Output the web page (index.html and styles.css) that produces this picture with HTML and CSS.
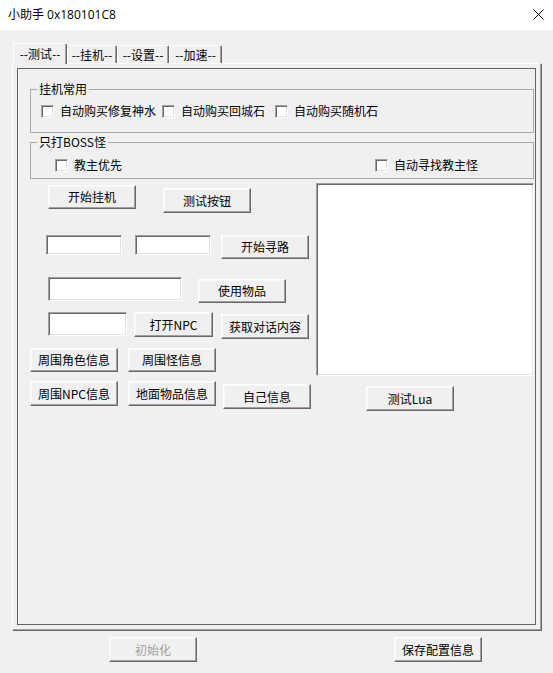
FILE: index.html
```html
<!DOCTYPE html>
<html lang="zh-CN">
<head>
<meta charset="utf-8">
<title>小助手</title>
<link rel="stylesheet" href="styles.css">
</head>
<body>
<div class="titlebar">
  <span class="title">小助手 0x180101C8</span>
  <svg class="close" width="11" height="11" viewBox="0 0 11 11"><path d="M0.5 0.5 L10.5 10.5 M10.5 0.5 L0.5 10.5" stroke="#000" stroke-width="1" fill="none"/></svg>
</div>
<div class="dialog">
  <div class="tabs">
    <div class="tab tab-active w54">--测试--</div>
    <div class="tab w50">--挂机--</div>
    <div class="tab w52">--设置--</div>
    <div class="tab w53">--加速--</div>
  </div>
  <div class="panel">
    <div class="frame">
      <div class="group g1">
        <div class="group-title">挂机常用</div>
        <div class="checks g1-checks">
          <label class="chk c1"><span class="box"></span>自动购买修复神水</label>
          <label class="chk c2"><span class="box"></span>自动购买回城石</label>
          <label class="chk"><span class="box"></span>自动购买随机石</label>
        </div>
      </div>
      <div class="group g2">
        <div class="group-title">只打BOSS怪</div>
        <div class="checks g2-checks">
          <label class="chk c3"><span class="box"></span>教主优先</label>
          <label class="chk"><span class="box"></span>自动寻找教主怪</label>
        </div>
      </div>
      <div class="work">
        <div class="left">
          <div class="row row-a">
            <button class="btn h24 a1">开始挂机</button>
            <button class="btn a2">测试按钮</button>
          </div>
          <div class="row row-b">
            <input class="edit e-b1" type="text">
            <input class="edit e-b2" type="text">
            <button class="btn h24 b3">开始寻路</button>
          </div>
          <div class="row row-c">
            <input class="edit e-c1" type="text">
            <button class="btn h24 c2b">使用物品</button>
          </div>
          <div class="row row-d">
            <input class="edit e-d1" type="text">
            <button class="btn d2">打开NPC</button>
            <button class="btn d3">获取对话内容</button>
          </div>
          <div class="row row-e">
            <button class="btn h24 e1">周围角色信息</button>
            <button class="btn h24 e2">周围怪信息</button>
          </div>
          <div class="row row-f">
            <button class="btn f1">周围NPC信息</button>
            <button class="btn f2">地面物品信息</button>
            <button class="btn f3">自己信息</button>
          </div>
        </div>
        <div class="right">
          <textarea class="log"></textarea>
          <button class="btn lua">测试Lua</button>
        </div>
      </div>
    </div>
  </div>
  <div class="footer">
    <button class="btn disabled ft1">初始化</button>
    <button class="btn ft2">保存配置信息</button>
  </div>
</div>
</body>
</html>
```

FILE: styles.css
```css
* { box-sizing: border-box; }
html, body { margin: 0; padding: 0; }
body {
  width: 553px;
  height: 673px;
  overflow: hidden;
  background: #f0f0f0;
  font-family: "Noto Sans CJK SC", "Noto Sans", sans-serif;
  font-size: 12px;
  color: #000;
}
.titlebar {
  height: 30px;
  background: #fff;
  display: flex;
  align-items: center;
  justify-content: space-between;
  padding: 0 9px 0 8px;
}
.title {
  font-family: "Open Sans", "Noto Sans CJK SC", sans-serif;
  font-size: 12px;
  line-height: 16px;
  margin-top: -1px;
}
.close { display: block; margin-top: -1px; }

.tabs {
  display: flex;
  align-items: flex-end;
  height: 20px;
  margin: 13px 0 0 13px;
}
.tab {
  height: 18px;
  background: #f0f0f0;
  border-left: 1px solid #fff;
  border-top: 1px solid #fff;
  border-right: 1px solid #696969;
  box-shadow: inset -1px 0 #a0a0a0;
  border-radius: 2px 2px 0 0;
  display: flex;
  align-items: center;
  justify-content: center;
  line-height: 14px;
  font-size: 12px;
}
.tab-active {
  height: 21px;
  margin-bottom: -1px;
  position: relative;
  z-index: 1;
  padding-bottom: 1px;
}
.w54 { width: 54px; }
.w50 { width: 50px; }
.w52 { width: 52px; }
.w53 { width: 53px; }

.panel {
  margin-left: 12px;
  width: 529px;
  height: 567px;
  padding: 4px;
  border-left: 1px solid #fff;
  border-top: 1px solid #fff;
  border-right: 1px solid #a0a0a0;
  border-bottom: 1px solid #a0a0a0;
  box-shadow: 1px 1px 0 #696969;
}
.frame {
  height: 557px;
  border: 1px solid #646464;
  padding-top: 20px;
}

.group {
  margin-left: 12px;
  width: 504px;
  border: 1px solid #a8a8a8;
}
.g1 { height: 44px; }
.g2 { height: 37px; margin-top: 9px; }
.group-title {
  margin: -8px 0 0 6px;
  padding: 0 2px;
  width: fit-content;
  line-height: 14px;
  background: #f0f0f0;
}
.checks { display: flex; align-items: center; height: 16px; }
.g1-checks { margin-top: 7px; padding-left: 10px; }
.g2-checks { margin-top: 8px; padding-left: 24px; }
.chk { display: flex; align-items: center; line-height: 14px; }
.c1 { width: 121px; }
.c2 { width: 113px; }
.c3 { width: 320px; }
.box {
  width: 13px;
  height: 13px;
  margin-right: 6px;
  background: #fff;
  border: 1px solid;
  border-color: #a0a0a0 #fff #fff #a0a0a0;
  box-shadow: inset 1px 1px #696969, inset -1px -1px #e3e3e3;
}

.work { display: flex; margin-top: 4px; }
.left { width: 298px; }
.right { width: 218px; }
.row { display: flex; align-items: flex-start; }

.btn {
  width: 88px;
  height: 25px;
  margin: 0;
  padding: 0;
  background: #f0f0f0;
  font-family: inherit;
  font-size: 12px;
  line-height: 14px;
  color: #000;
  border: 1px solid;
  border-color: #fff #696969 #696969 #fff;
  box-shadow: inset -1px -1px #a0a0a0, inset 1px 1px #f8f8f8;
  border-radius: 0;
}
.h24 { height: 24px; }
.disabled { color: #a0a0a0; }

.edit {
  height: 24px;
  margin: 0;
  padding: 0 2px;
  background: #fff;
  font-family: inherit;
  font-size: 12px;
  border: 1px solid;
  border-color: #a0a0a0 #fff #fff #a0a0a0;
  box-shadow: inset 1px 1px #696969, inset -1px -1px #e3e3e3;
  outline: none;
}

.row-a { margin-top: 2px; }
.a1 { margin-left: 30px; }
.a2 { margin-left: 27px; margin-top: 3px; }

.row-b { margin-top: 22px; }
.e-b1 { margin-left: 28px; width: 76px; height: 20px; }
.e-b2 { margin-left: 13px; width: 76px; height: 20px; }
.b3 { margin-left: 10px; }

.row-c { margin-top: 18px; }
.e-c1 { margin-left: 30px; width: 134px; }
.c2b { margin-left: 16px; margin-top: 2px; }

.row-d { margin-top: 9px; }
.e-d1 { margin-left: 30px; width: 79px; }
.d2 { margin-left: 7px; width: 79px; }
.d3 { margin-left: 8px; margin-top: 2px; }

.row-e { margin-top: 9px; }
.e1 { margin-left: 12px; }
.e2 { margin-left: 10px; }

.row-f { margin-top: 9px; }
.f1 { margin-left: 12px; }
.f2 { margin-left: 10px; }
.f3 { margin-left: 7px; margin-top: 3px; }

.log {
  display: block;
  width: 218px;
  height: 193px;
  margin: 0;
  resize: none;
  background: #fff;
  border: 1px solid;
  border-color: #a0a0a0 #fff #fff #a0a0a0;
  box-shadow: inset 1px 1px #696969, inset -1px -1px #e3e3e3;
  outline: none;
}
.lua { display: block; margin: 10px 0 0 50px; }

.footer { display: flex; margin-top: 7px; }
.ft1 { margin-left: 109px; }
.ft2 { margin-left: 197px; }
```
